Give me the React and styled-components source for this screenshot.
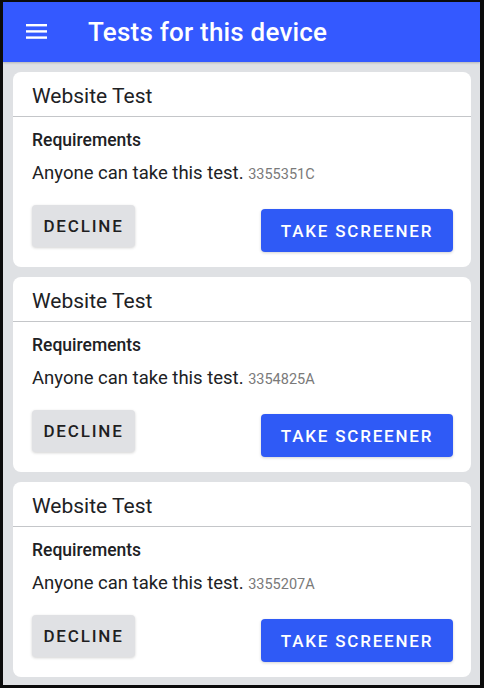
import React from "react";
import styled, { createGlobalStyle } from "styled-components";

const GlobalStyle = createGlobalStyle`
  html, body {
    margin: 0;
    padding: 0;
    background: #0b0b0b;
  }
  body {
    font-family: Roboto, "Liberation Sans", sans-serif;
  }
`;

const Frame = styled.div`
  margin: 2px 4px 0 3px;
  height: 683px;
  background: #dfe1e4;
  overflow: hidden;
  display: flex;
  flex-direction: column;
`;

const TopBar = styled.header`
  height: 60px;
  flex-shrink: 0;
  background: #3459ff;
  display: flex;
  align-items: center;
  padding-left: 23px;
  box-shadow: 0 1px 2px rgba(0, 0, 0, 0.2);
`;

const MenuButton = styled.div`
  width: 22px;
  height: 18px;
  display: flex;
  align-items: center;
  margin-top: -2px;
`;

const Title = styled.h1`
  margin: 0 0 0 40px;
  font-size: 26px;
  font-weight: 500;
  color: #ffffff;
  letter-spacing: 0.2px;
`;

const List = styled.main`
  display: flex;
  flex-direction: column;
  gap: 10px;
  padding: 10px 9px 0 10px;
`;

const Card = styled.section`
  height: 195px;
  flex-shrink: 0;
  background: #ffffff;
  border-radius: 8px;
  display: flex;
  flex-direction: column;
`;

const CardTitle = styled.div`
  height: 45px;
  box-sizing: border-box;
  padding: 12px 0 0 19px;
  border-bottom: 1px solid #c4c6c9;
  font-size: 21px;
  color: #202124;
`;

const CardBody = styled.div`
  padding: 12px 18px 0 19px;
`;

const Label = styled.div`
  font-size: 17.5px;
  font-weight: 500;
  line-height: 22px;
  color: #202124;
`;

const Text = styled.div`
  margin-top: 11px;
  font-size: 18.5px;
  line-height: 22px;
  color: #202124;
`;

const Code = styled.span`
  font-size: 14.5px;
  color: #7a7a7a;
`;

const Actions = styled.div`
  margin-top: 19px;
  display: flex;
  justify-content: space-between;
  align-items: flex-start;
`;

const Button = styled.button`
  border: none;
  border-radius: 4px;
  padding: 0;
  font-family: Roboto, "Liberation Sans", sans-serif;
  font-size: 17px;
  font-weight: 500;
  letter-spacing: 1.8px;
  text-transform: uppercase;
  cursor: pointer;
  height: ${(p) => (p.$primary ? "43px" : "42px")};
  width: ${(p) => (p.$primary ? "192px" : "103px")};
  margin-top: ${(p) => (p.$primary ? "4px" : "0")};
  background: ${(p) => (p.$primary ? "#2f5af6" : "#e0e1e4")};
  color: ${(p) => (p.$primary ? "#ffffff" : "#1f1f1f")};
  box-shadow: 0 1px 3px rgba(0, 0, 0, 0.18);
`;

const tests = ["3355351C", "3354825A", "3355207A"];

function MenuIcon() {
  return (
    <svg width="22" height="16" viewBox="0 0 22 16">
      <rect x="0" y="1" width="21" height="2.4" fill="#fff" />
      <rect x="0" y="7.2" width="21" height="2.4" fill="#fff" />
      <rect x="0" y="13.4" width="21" height="2.4" fill="#fff" />
    </svg>
  );
}

export default function App() {
  return (
    <>
      <GlobalStyle />
      <Frame>
        <TopBar>
          <MenuButton>
            <MenuIcon />
          </MenuButton>
          <Title>Tests for this device</Title>
        </TopBar>
        <List>
          {tests.map((code) => (
            <Card key={code}>
              <CardTitle>Website Test</CardTitle>
              <CardBody>
                <Label>Requirements</Label>
                <Text>
                  Anyone can take this test. <Code>{code}</Code>
                </Text>
                <Actions>
                  <Button>Decline</Button>
                  <Button $primary>Take Screener</Button>
                </Actions>
              </CardBody>
            </Card>
          ))}
        </List>
      </Frame>
    </>
  );
}
